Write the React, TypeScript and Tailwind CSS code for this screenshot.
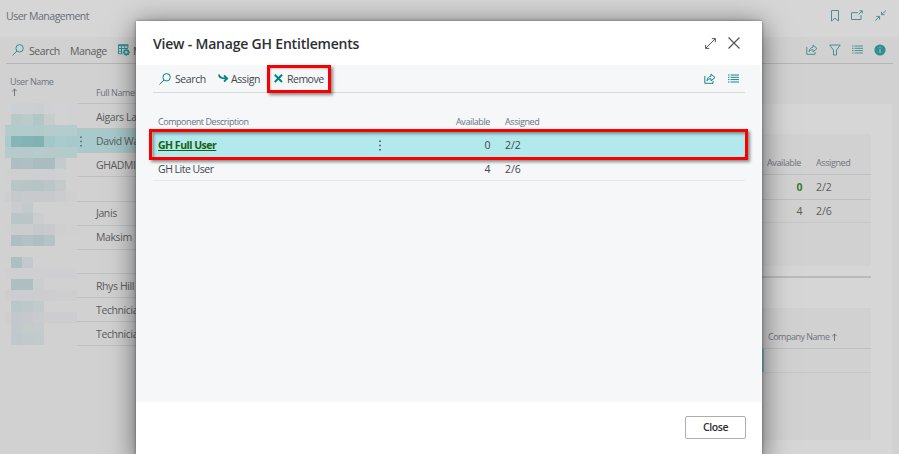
import type { ReactNode } from "react";

const mosaic: string[][] = [
  ["#d0d1d3", "#cdd0d2", "#cdd0d2", "#cccfd2", "#d0d1d4", "#d2d2d4", "#d1d1d3"],
  ["#d1d1d1", "#b8c9c9", "#bdcaca", "#b3c6c6", "#c9cccd", "#d2d2d3", "#d1d1d1"],
  ["#b6cccc", "#b2cbcc", "#b2cbcc", "#b2caca", "#b5cbcc", "#b5cccd", "#b5cccd"],
  ["#a9cbcd", "#86b5b7", "#84b3b5", "#82b1b3", "#a2c7c9", "#a8cbcd", "#a7c9cb"],
  ["#b6cccc", "#b6cacb", "#b6cacb", "#b6cccc", "#b6cacb", "#b5cacb", "#b4cbcc"],
  ["#d1d1d1", "#adbfc3", "#adc0c3", "#a9bdc1", "#a9bdc1", "#c5cacd", "#d1d1d1"],
  ["#d0d0d2", "#cecfd1", "#cecfd1", "#cecfd2", "#cfcfd2", "#cfd0d2", "#d1d1d2"],
  ["#d1d1d1", "#b9c6c8", "#b7c5c6", "#b5c4c5", "#bac6c7", "#c3cac9", "#d1d1d1"],
  ["#cececf", "#c6c9cc", "#c7cacd", "#c8c9cd", "#c7cacd", "#caccce", "#cfcfd0"],
  ["#d1d1d1", "#c9cdcf", "#c2cbcc", "#d0d1d1", "#d1d1d1", "#d1d1d1", "#d1d1d1"],
  ["#d1d1d1", "#b9c5c7", "#b9c5c7", "#cbcecf", "#d1d1d1", "#d1d1d1", "#d1d1d1"],
  ["#d0d0d1", "#cbccce", "#cbccce", "#c6c9cc", "#c9cacd", "#cfcfd0", "#d0d0d1"],
  ["#d1d1d1", "#adbfc0", "#b2c1c4", "#aebfc2", "#b4c3c4", "#d1d1d1", "#d1d1d1"],
  ["#d1d1d1", "#d1d1d1", "#d1d1d1", "#d1d1d1", "#d1d1d1", "#d1d1d1", "#d1d1d1"],
  ["#d1d1d1", "#acbfc3", "#c1c9cb", "#d1d1d1", "#d1d1d1", "#d1d1d1", "#d1d1d1"],
  ["#cfcfd1", "#cfcfd1", "#cfcfd1", "#cfcfd1", "#cfcfd1", "#cfcfd1", "#cfcfd1"],
  ["#d1d1d1", "#adbfc1", "#adbfc1", "#cccdcf", "#d1d1d1", "#d1d1d1", "#d1d1d1"],
  ["#cececf", "#cccdd0", "#cccdd0", "#cdcdd0", "#cdcdd0", "#cecece", "#cecece"],
  ["#d1d1d1", "#b9c7c8", "#bdc8c9", "#c2cbcb", "#d1d1d1", "#d1d1d1", "#d1d1d1"],
  ["#cececf", "#c3c8cd", "#c5c9cd", "#c9ccce", "#cdcdcf", "#cdcdcf", "#cdcdcf"],
  ["#d1d1d1", "#c1c9cc", "#c4cbcb", "#c5cbcd", "#d1d1d1", "#d1d1d1", "#d1d1d1"],
  ["#d1d1d1", "#bfc9cc", "#c1c9cc", "#c3caca", "#d1d1d1", "#d1d1d1", "#d1d1d1"],
];

const fullNames = ["Aigars La", "David Wa", "GHADMI", "", "Janis", "Maksim", "", "Rhys Hill", "Technicia", "Technicia"];

function Svg({ w, h, children, className = "" }: { w: number; h: number; children: ReactNode; className?: string }) {
  return (
    <svg width={w} height={h} viewBox={`0 0 ${w} ${h}`} fill="none" stroke="currentColor" className={`shrink-0 ${className}`}>
      {children}
    </svg>
  );
}

const SearchIcon = () => (
  <Svg w={12} h={12}>
    <circle cx="7.6" cy="4.3" r="3.7" />
    <path d="M5 7 L0.5 11.4" />
  </Svg>
);

const ShareIcon = () => (
  <Svg w={12} h={11}>
    <path d="M0.8 3 V10.3 H9 V7.8 M3 7.8 C3.3 5 4.8 3.5 7 3.3 V1 L11 4.5 L7 7.8 V5.7 C5.3 5.7 4 6.3 3 7.8 Z" />
  </Svg>
);

const ListIcon = () => (
  <Svg w={11} h={9}>
    <path d="M0 1 H1.5 M2.5 1 H11 M0 3.3 H1.5 M2.5 3.3 H11 M0 5.6 H1.5 M2.5 5.6 H11 M0 8 H1.5 M2.5 8 H11" />
  </Svg>
);

const DotsIcon = () => (
  <Svg w={2} h={11}>
    <path d="M1 0.5 V2 M1 4.8 V6.3 M1 9 V10.5" strokeWidth="1.5" />
  </Svg>
);

const UpArrow = () => (
  <Svg w={5} h={8}>
    <path d="M2.5 8 V1 M0.3 3.2 L2.5 1 L4.7 3.2" />
  </Svg>
);

function Backdrop() {
  return (
    <div className="flex h-full w-full flex-col bg-[#d1d1d1] text-[#5c5c5c]">
      <header className="flex h-[37px] items-center justify-between bg-[#d6d6d6] pl-[6px] pr-[13px]">
        <span className="pb-[4px] tracking-[-0.5px] text-[#686d75]">User Management</span>
        <div className="flex items-center gap-[12px] pb-[6px] text-[#4a9093]">
          <Svg w={8} h={12}><path d="M0.5 0.5 H7.5 V11 L4 8.2 L0.5 11 Z" /></Svg>
          <Svg w={12} h={11}><path d="M7 2.7 H0.5 V9.5 H10 V5 M7.5 4.3 L11 1 M8.5 0.8 H11.3 V3.5" /></Svg>
          <Svg w={11} h={11}><path d="M11 0.5 L6.8 4.5 M6.5 1.7 V4.7 H9.5 M0.3 10.6 L4.5 6.5 M1.3 6.4 H4.6 V9.6" /></Svg>
        </div>
      </header>
      <div className="mx-[6px] flex h-[27px] shrink-0 items-center justify-between border-b border-[#b7b7b7] pl-[6px] pr-[7px]">
        <div className="flex items-center">
          <span className="text-[#328e91]"><SearchIcon /></span>
          <span className="ml-[5px] w-[41px] pt-[3px] tracking-[-0.4px]">Search</span>
          <span className="w-[48px] pt-[3px] tracking-[-0.4px]">Manage</span>
          <Svg w={12} h={12} className="text-[#328e91]">
            <path d="M0 1.2 H10.3" strokeWidth="2" />
            <path d="M0.5 1 V9.8 H4.5 M0 4.5 H10 M0 7.2 H4.5 M3.5 2 V9.5 M6.7 2 V4.5 M9.8 1 V4" />
            <circle cx="8.3" cy="8.3" r="2.1" strokeWidth="1.8" />
            <path d="M8.3 4.8 V6 M8.3 10.6 V12 M4.8 8.3 H6 M10.6 8.3 H12 M5.8 5.8 L6.7 6.7 M10 10 L10.8 10.8 M5.8 10.8 L6.7 10 M10 6.7 L10.8 5.8" />
          </Svg>
          <span className="ml-[3px] w-[2px] overflow-visible pt-[3px]">M</span>
        </div>
        <div className="flex items-center gap-[11px] pb-px text-[#4a9093]">
          <ShareIcon />
          <Svg w={12} h={12}><path d="M0.7 1 H11.3 L7.5 6 V11 H4.5 V6 Z" /></Svg>
          <ListIcon />
          <Svg w={12} h={12}>
            <circle cx="6" cy="6" r="5.6" fill="#328e91" stroke="none" />
            <path d="M6 2.8 V4 M6 5 V9" stroke="#a5c9ca" />
          </Svg>
        </div>
      </div>
      <div className="flex min-h-0 flex-1">
        <section className="w-[150px] pl-[5px]">
          <div className="flex h-[39px] pl-[5px] text-[9px] leading-[11px] text-[#70747c]">
            <div className="w-[86px] pt-[12px] tracking-[-0.4px]">
              User Name
              <div className="pl-[2px] pt-px"><UpArrow /></div>
            </div>
            <div className="whitespace-nowrap pt-[23px] tracking-[-0.4px]">Full Name</div>
          </div>
          <div className="flex">
            <div className="w-[72px]">
              {mosaic.map((row, r) => (
                <div key={r} className="flex h-[11px]">
                  {row.map((color, c) => (
                    <i key={c} className={c === 0 ? "w-[6px]" : "w-[11px]"} style={{ backgroundColor: color }} />
                  ))}
                </div>
              ))}
            </div>
            <div className="flex-1 border-t border-[#bfc0c2] pt-px">
              {fullNames.map((name, i) => (
                <div key={i} className={`flex h-[24.15px] items-center whitespace-nowrap border-b border-[#bfc0c2] pt-[2px] ${i === 1 ? "bg-[#a7cacc]" : ""}`}>
                  <span className="w-[19px] pl-[3px]">{i === 1 && <DotsIcon />}</span>
                  {name}
                </div>
              ))}
            </div>
          </div>
        </section>
        <aside className="ml-auto mr-[7px] mt-[40px] w-[142px] bg-[#d6d6d6] pr-[21px] pt-[30px]">
          <div className="h-[132px] bg-[#d1d1d1]">
            <div className="flex h-[41px] items-center border-b border-[#bfc0c2] pt-[18px] text-[9px] text-[#70747c]">
              <span className="w-[51px] text-right">Available</span>
              <span className="pl-[15px]">Assigned</span>
            </div>
            <div className="flex h-[25px] items-center border-b border-[#bfc0c2] pt-px">
              <b className="w-[52px] text-right text-[#3d773c]">0</b>
              <span className="pl-[14px] tracking-normal">2/2</span>
            </div>
            <div className="flex h-[23px] items-center border-b border-[#c7c7c7] pt-[2px]">
              <span className="w-[52px] text-right">4</span>
              <span className="pl-[14px] tracking-normal">2/6</span>
            </div>
          </div>
          <div className="mt-[10px] h-[2px] bg-[#bababa]" />
          <div className="mt-[30px] h-[132px] bg-[#d1d1d1]">
            <div className="flex h-[41px] items-center gap-[3px] whitespace-nowrap border-b border-[#bfc0c2] pl-[18px] pt-[18px] text-[9px] tracking-[-0.5px] text-[#70747c]">
              Company Name <UpArrow />
            </div>
            <div className="h-[24px] border-b border-[#c5c6c7] pl-[12px]"><div className="h-full w-[2px] bg-[#7cc3c6]" /></div>
          </div>
        </aside>
      </div>
    </div>
  );
}

export default function App() {
  return (
    <div className="relative h-[454px] w-[899px] overflow-hidden font-['Open_Sans','Noto_Sans',sans-serif] text-[10.5px] tracking-[-0.4px]">
      <Backdrop />
      <div className="absolute left-[136px] top-[21px] flex h-[440px] w-[626px] flex-col bg-white text-[#43474c] shadow-[0_0_3px_rgba(0,0,0,0.4),0_4px_26px_rgba(0,0,0,0.55)]">
        <header className="flex h-[44px] shrink-0 items-center justify-between pl-[17px] pr-[22px]">
          <h1 className="whitespace-nowrap pt-px text-[14px] font-[550] tracking-[-0.2px] text-[#2c2f33]">View - Manage GH Entitlements</h1>
          <div className="flex items-center gap-[12px] text-[#555]">
            <Svg w={11} h={11}><path d="M0.8 10.2 L10.2 0.8 M6.8 0.6 H10.4 V4.2 M0.6 6.8 V10.4 H4.2" /></Svg>
            <Svg w={12} h={12}><path d="M0.5 0.5 L11.5 11.5 M11.5 0.5 L0.5 11.5" strokeWidth="1.2" /></Svg>
          </div>
        </header>
        <main className="mr-px h-[337px] shrink-0 bg-[#f5f7f9] pl-[17px] pr-[16px]">
          <div className="flex h-[28px] items-center justify-between border-b border-[#d5d8db]">
            <div className="flex items-center text-[#008489]">
              <span className="ml-[6px]"><SearchIcon /></span>
              <span className="ml-[4px] w-[43px] pt-[3px]">
                <span className="tracking-[-0.4px] text-[#43474c]">Search</span>
              </span>
              <Svg w={11} h={9}>
                <path d="M1 0.5 C1 3.5 3 4.5 8 4.5 M6 1.3 L9.2 4.5 L6 7.7" strokeWidth="1.8" />
              </Svg>
              <span className="ml-[2px] w-[43px] pt-[3px] text-[#43474c]">Assign</span>
              <Svg w={9} h={9}><path d="M0.8 0.8 L8 8 M8 0.8 L0.8 8" strokeWidth="2" /></Svg>
              <span className="ml-[4px] pt-[3px] tracking-[-0.5px] text-[#43474c]">Remove</span>
            </div>
            <div className="flex items-center gap-[12px] pr-[6px] text-[#16878b]">
              <ShareIcon />
              <ListIcon />
            </div>
          </div>
          <div className="flex h-[38px] items-end pb-[3px] text-[9px] leading-[12px] text-[#69717e]">
            <span className="w-[242px] pl-[5px] tracking-[-0.45px]">Component Description</span>
            <span className="w-[95px] text-right">Available</span>
            <span className="pl-[15px]">Assigned</span>
          </div>
          <div className="flex h-[27px] items-center bg-[#b2e9ec] pl-[5px] pt-[2px]">
            <b className="w-[221px] tracking-[-0.5px] text-[#17620f] underline">GH Full User</b>
            <span className="w-[13px]"><DotsIcon /></span>
            <span className="w-[98px] text-right">0</span>
            <span className="pl-[15px] tracking-normal">2/2</span>
          </div>
          <div className="flex h-[23px] items-center border-b border-[#e6e8eb] pl-[5px] pt-[2px]">
            <span className="w-[219px] tracking-[-0.5px]">GH Lite User</span>
            <span className="w-[113px] text-right">4</span>
            <span className="pl-[15px] tracking-normal">2/6</span>
          </div>
        </main>
        <footer className="flex justify-end pr-[16px] pt-[14px]">
          <button className="h-[23px] w-[61px] rounded-[2px] border border-[#aeaeae] bg-white pt-px font-[550] text-[#2c2f33]">Close</button>
        </footer>
      </div>
      <div className="absolute left-[267px] top-[65px] h-[28px] w-[64px] border-[3px] border-[#fa0000] shadow-[2px_2px_3px_rgba(0,0,0,0.45),inset_1px_1px_2px_rgba(0,0,0,0.2)]" />
      <div className="absolute left-[149px] top-[129px] h-[31px] w-[599px] border-[3px] border-[#fa0000] shadow-[2px_2px_3px_rgba(0,0,0,0.45),inset_2px_2px_3px_rgba(0,0,0,0.35)]" />
    </div>
  );
}
